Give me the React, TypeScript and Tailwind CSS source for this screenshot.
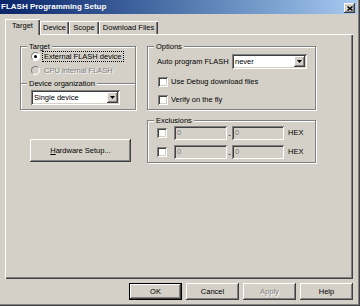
const raised =
  'bg-[#d4d0c8] shadow-[inset_-1px_-1px_#404040,inset_1px_1px_#fff,inset_-2px_-2px_#808080,inset_2px_2px_#d4d0c8]';
const sunken =
  'shadow-[inset_1px_1px_#808080,inset_-1px_-1px_#fff,inset_2px_2px_#404040,inset_-2px_-2px_#d4d0c8]';
const disabledText = 'text-[#808080] [text-shadow:1px_1px_0_#fff]';

function Group({ legend, className = '', children }: { legend: string; className?: string; children: React.ReactNode }) {
  return (
    <fieldset className={`border border-[#808080] shadow-[inset_1px_1px_#fff,1px_1px_#fff] ${className}`}>
      <legend className="ml-[6px] px-[2px] leading-[11px] bg-[#d4d0c8]">{legend}</legend>
      {children}
    </fieldset>
  );
}

function Arrow() {
  return (
    <svg width="5" height="3" viewBox="0 0 5 3">
      <polygon points="0,0 5,0 2.5,3" fill="#000" />
    </svg>
  );
}

function Select({ value, className = '' }: { value: string; className?: string }) {
  return (
    <div className={`h-[15px] bg-white flex items-stretch ${sunken} ${className}`}>
      <span className="flex-1 flex items-center pl-[3px]">{value}</span>
      <span className={`w-[11px] my-[2px] mr-[2px] flex items-center justify-center ${raised}`}>
        <Arrow />
      </span>
    </div>
  );
}

function Checkbox() {
  return <span className={`w-[10px] h-[10px] bg-white shrink-0 ${sunken}`} />;
}

function Radio({ checked, disabled }: { checked?: boolean; disabled?: boolean }) {
  return (
    <span
      className={`w-[9px] h-[9px] rounded-full border border-t-[#808080] border-l-[#808080] border-r-white border-b-white flex items-center justify-center shrink-0 ${
        disabled ? 'bg-[#d4d0c8]' : 'bg-white'
      }`}
    >
      {checked && <span className="w-[3px] h-[3px] rounded-full bg-black" />}
    </span>
  );
}

function Field() {
  return (
    <span className={`h-[14px] flex items-center pl-[3px] bg-[#d4d0c8] ${sunken} ${disabledText} [text-shadow:none]`}>0</span>
  );
}

export default function App() {
  const tabs = [
    { label: 'Target', w: 'w-[35px]', active: true },
    { label: 'Device', w: 'w-[29px]' },
    { label: 'Scope', w: 'w-[30px]' },
    { label: 'Download Files', w: 'w-[59px]' },
  ];

  return (
    <div
      className="w-[360px] h-[306px] bg-[#d4d0c8] pr-[3px] flex flex-col text-black text-[7.5px] leading-none shadow-[inset_-1px_-1px_#404040,inset_-2px_-2px_#808080]"
      style={{ fontFamily: '"Liberation Sans", Arial, sans-serif' }}
    >
      {/* title bar */}
      <div className="h-[14px] flex justify-between pl-[1px] pr-[2px] bg-gradient-to-r from-[#0a246a] to-[#a6caf0]">
        <span className="self-center text-white font-bold text-[8px]">FLASH Programming Setup</span>
        <span className={`self-end mb-[1px] w-[11px] h-[10px] flex items-center justify-center ${raised}`}>
          <svg width="6" height="5" viewBox="0 0 6 5">
            <path d="M0.5 0.5 L5.5 4.5 M5.5 0.5 L0.5 4.5" stroke="#000" strokeWidth="1.4" />
          </svg>
        </span>
      </div>

      {/* tabs */}
      <div className="mt-[5px] h-[15px] pl-[5px] flex items-end">
        {tabs.map((t) =>
          t.active ? (
            <div
              key={t.label}
              className={`${t.w} relative z-10 h-[16px] -mb-px pb-[2px] bg-[#d4d0c8] flex items-center justify-center shadow-[inset_1px_1px_#fff,inset_-1px_0_#404040,inset_-2px_0_#808080]`}
            >
              {t.label}
            </div>
          ) : (
            <div
              key={t.label}
              className={`${t.w} h-[13px] flex items-center justify-center shadow-[inset_1px_1px_#fff,inset_-1px_0_#404040,inset_-2px_0_#808080]`}
            >
              {t.label}
            </div>
          ),
        )}
      </div>

      {/* panel */}
      <div className="ml-[5px] w-[348px] h-[245px] pt-[7px] pl-[15px] flex gap-[11px] shadow-[inset_1px_1px_#fff,inset_-1px_-1px_#404040,inset_-2px_-2px_#808080]">
        <div className="w-[116px] flex flex-col">
          <Group legend="Target">
            <div className="pl-[10px] pb-[8px] flex flex-col">
              <div className="h-[9px] flex items-center gap-[3px]">
                <Radio checked />
                <span className="outline-1 outline-dotted outline-black px-px py-px">External FLASH device</span>
              </div>
              <div className="h-[9px] mt-[5px] flex items-center gap-[3px]">
                <Radio disabled />
                <span className={`px-px ${disabledText}`}>CPU internal FLASH</span>
              </div>
            </div>
          </Group>
          <Group legend="Device organization" className="-mt-[6px]">
            <div className="pl-[10px] pr-[15px] pt-[1px] pb-[4px]">
              <Select value="Single device" />
            </div>
          </Group>
          <button className={`mt-[29px] ml-[10px] w-[101px] h-[23px] flex items-center justify-center ${raised}`}>
            <span>
              <span className="underline">H</span>ardware Setup...
            </span>
          </button>
        </div>

        <div className="w-[169px] flex flex-col">
          <Group legend="Options">
            <div className="pl-[9px] pt-[2px] pb-[4px] flex flex-col">
              <div className="flex items-center">
                <span className="w-[75px]">Auto program FLASH</span>
                <Select value="never" className="w-[75px]" />
              </div>
              <div className="mt-[8px] h-[10px] ml-[1px] flex items-center gap-[3px]">
                <Checkbox />
                <span>Use Debug download files</span>
              </div>
              <div className="mt-[8px] h-[10px] ml-[1px] flex items-center gap-[3px]">
                <Checkbox />
                <span>Verify on the fly</span>
              </div>
            </div>
          </Group>
          <Group legend="Exclusions" className="mt-[5px]">
            <div className="pl-[9px] pb-[3px] flex flex-col gap-[5px]">
              {[0, 1].map((i) => (
                <div key={i} className="h-[14px] flex items-center">
                  <Checkbox />
                  <span className="ml-[7px] w-[53px]">
                    <Field />
                  </span>
                  <span className="w-[5px] text-center pt-[3px]">-</span>
                  <span className="w-[52px]">
                    <Field />
                  </span>
                  <span className="ml-[4px]">HEX</span>
                </div>
              ))}
            </div>
          </Group>
        </div>
      </div>

      {/* buttons */}
      <div className="mt-[4px] pr-[4px] flex justify-end gap-[4px]">
        <button className={`w-[53px] h-[17px] border border-black ${raised}`}>OK</button>
        <button className={`w-[53px] h-[17px] ${raised}`}>Cancel</button>
        <button className={`w-[53px] h-[17px] ${raised} ${disabledText}`}>Apply</button>
        <button className={`w-[53px] h-[17px] ${raised}`}>Help</button>
      </div>
    </div>
  );
}
